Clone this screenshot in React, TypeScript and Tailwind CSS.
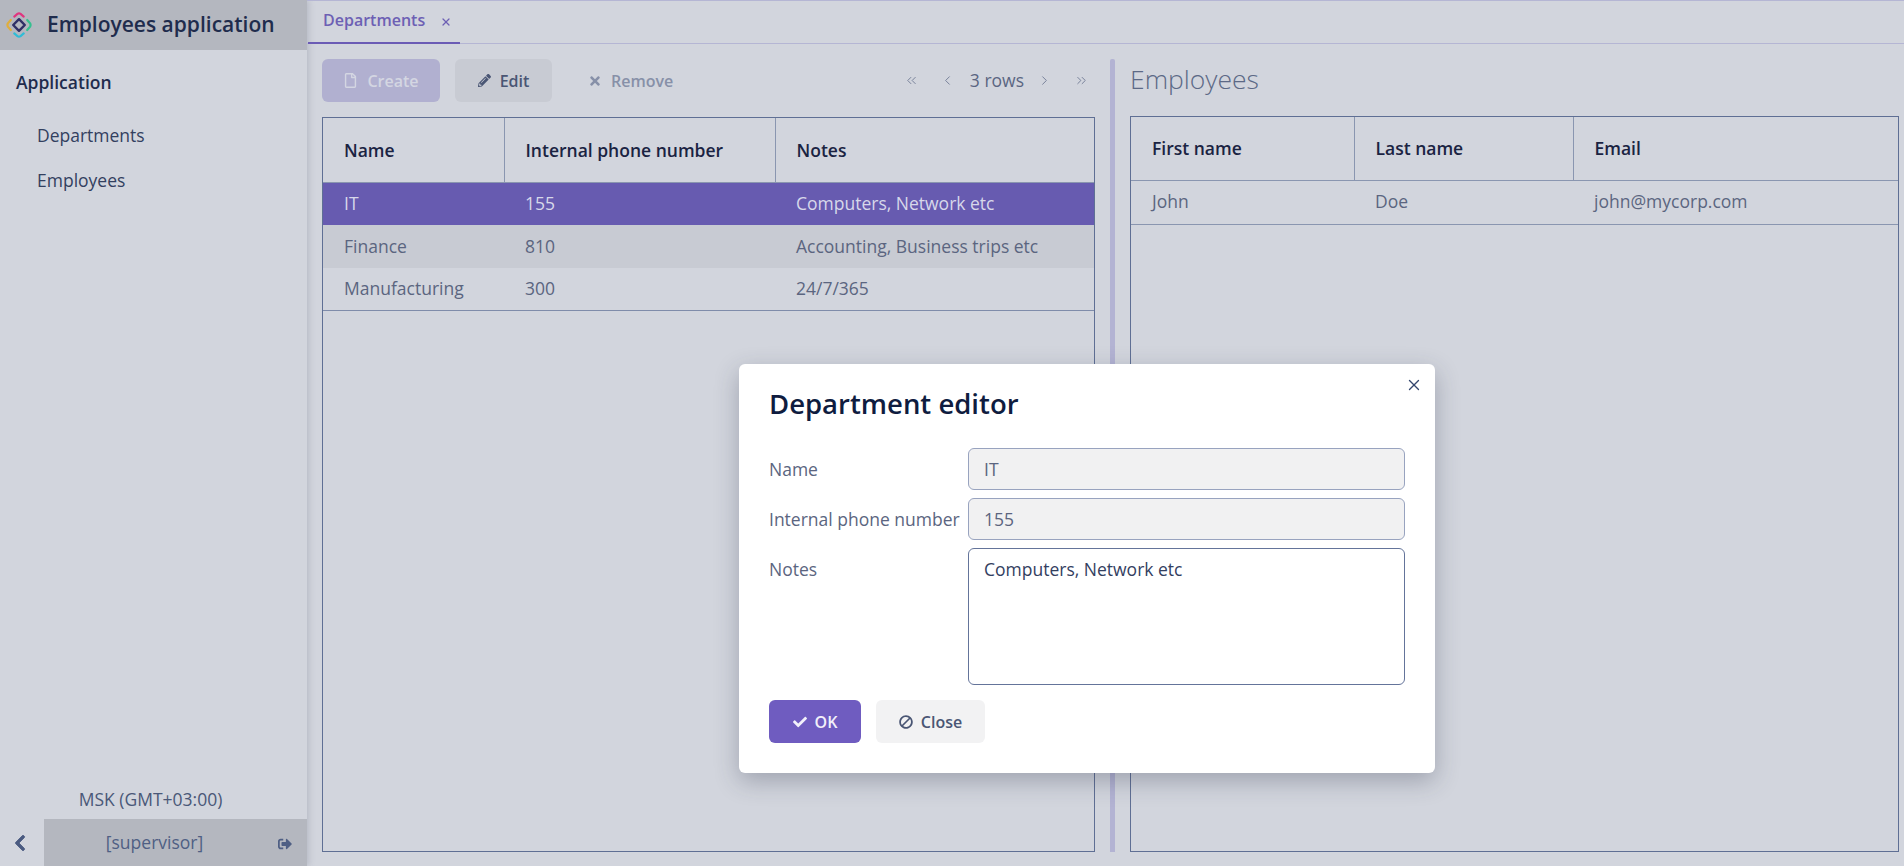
import React from "react";
import { FaRegFile, FaPencilAlt, FaTimes, FaCheck, FaBan, FaChevronLeft, FaSignOutAlt } from "react-icons/fa";
import { ChevronsLeft, ChevronsRight, ChevronLeft, ChevronRight, X } from "lucide-react";

function Logo() {
  return (
    <svg width="26" height="26" viewBox="0 0 26 26" fill="none" strokeLinecap="round">
      <path d="M13 7.2 L18.8 13 L13 18.8 L7.2 13 Z" stroke="#2f2f66" strokeWidth="2.4" strokeLinejoin="round" />
      <path d="M8.3 4.6 L11.4 1.9 Q13 .9 14.6 1.9 L17.7 4.6" stroke="#e0357f" strokeWidth="2.2" />
      <path d="M21.2 8 L24.1 11.4 Q25 13 24.1 14.6 L21.2 18" stroke="#35c08f" strokeWidth="2.2" />
      <path d="M8.3 21.4 L11.4 24.1 Q13 25.1 14.6 24.1 L17.7 21.4" stroke="#2fbcd6" strokeWidth="2.2" />
      <path d="M4.8 8 L1.9 11.4 Q1 13 1.9 14.6 L4.8 18" stroke="#e0ae3c" strokeWidth="2.2" />
    </svg>
  );
}

function DataTable({ cols, head, headH, rows }: { cols: number[]; head: string[]; headH: string; rows: { cells: string[]; cls: string; h: string }[] }) {
  return (
    <div className="flex-1 border border-[#5f6f94]">
      <table className="w-full table-fixed border-collapse">
        <colgroup>
          {cols.map((c, i) => (
            <col key={i} style={{ width: c ? c : undefined }} />
          ))}
        </colgroup>
        <thead>
          <tr className={`${headH} border-b border-[#8a96b0]`}>
            {head.map((h, i) => (
              <th key={h} className={`pl-[21px] text-left font-semibold text-[#1a2342] ${i < head.length - 1 ? "border-r border-[#8a96b0]" : ""}`}>
                {h}
              </th>
            ))}
          </tr>
        </thead>
        <tbody>
          {rows.map((r, i) => (
            <tr key={i} className={`${r.h} ${r.cls}`}>
              {r.cells.map((c, j) => (
                <td key={j} className="p-0 pb-[1px] pl-[21px]">
                  {c}
                </td>
              ))}
            </tr>
          ))}
        </tbody>
      </table>
    </div>
  );
}

export default function App() {
  return (
    <div className="relative flex h-[866px] w-[1904px] overflow-hidden bg-[#d2d5dd] text-[17.5px] text-[#4f5b78] font-['Open_Sans','Noto_Sans',sans-serif]">
      <aside className="flex w-[307px] shrink-0 flex-col bg-[#d2d5dd] shadow-[2px_0_6px_rgba(90,95,120,0.22)]">
        <div className="flex h-[50px] items-center bg-[#b4b7bf] pl-[6px]">
          <Logo />
          <span className="ml-[15px] text-[21px] font-semibold text-[#1f2c4d]">Employees application</span>
        </div>
        <div className="pl-4 pt-[20px] font-semibold text-[#1f2c4d] leading-[24px]">Application</div>
        <nav className="flex flex-col gap-[21px] pl-[37px] pt-[29px] text-[#33405f] leading-[24px]">
          <span>Departments</span>
          <span>Employees</span>
        </nav>
        <div className="mt-auto pb-[8px] pr-[6px] text-center text-[#4a5878] leading-[24px]">MSK (GMT+03:00)</div>
        <div className="flex h-[47px] items-stretch">
          <div className="flex w-[44px] items-center justify-center pr-[4px] text-[#4a5a80]">
            <FaChevronLeft size={18} stroke="currentColor" strokeWidth={24} />
          </div>
          <div className="flex flex-1 items-center bg-[#b4b7bf]">
            <span className="flex-1 pr-[13px] text-center text-[#4f5f84]">[supervisor]</span>
            <FaSignOutAlt size={14} className="mr-[15px] mt-[3px] text-[#4f5f84]" />
          </div>
        </div>
      </aside>

      <main className="flex min-w-0 flex-1 flex-col">
        <div className="flex h-[44px] shrink-0 border-b border-t border-[#b5b6d4]">
          <div className="-mb-px ml-px flex w-[152px] items-center border-b-2 border-[#6b5cb5] pl-[15px] text-[16px] font-semibold text-[#6d60b4]">
            <span className="-mt-[3px]">Departments</span>
            <X size={12} strokeWidth={2.5} className="ml-[15px]" />
          </div>
        </div>
        <div className="flex min-h-0 flex-1 pb-[14px] pl-[15px] pr-[5px] pt-[15px]">
          <section className="flex w-[773px] shrink-0 flex-col">
            <div className="mb-[15px] flex h-[43px] shrink-0 items-center text-[16px] font-semibold">
              <button className="flex h-[43px] w-[118px] items-center justify-center gap-[9px] rounded-[6px] bg-[#b1b0d0] text-[#d4d6e2]">
                <FaRegFile size={15} />
                Create
              </button>
              <button className="ml-[15px] flex h-[43px] w-[97px] items-center justify-center gap-[9px] rounded-[6px] bg-[#c8cbd3] text-[#4a5674]">
                <FaPencilAlt size={13} />
                Edit
              </button>
              <button className="ml-[36px] flex items-center gap-[9px] text-[#8790a8]">
                <FaTimes size={14} />
                Remove
              </button>
              <div className="ml-auto flex items-center pr-[6px] font-normal text-[#5b6682]">
                <ChevronsLeft size={15} strokeWidth={1.4} className="text-[#6b7690]" />
                <ChevronLeft size={15} strokeWidth={1.4} className="ml-[21px] text-[#6b7690]" />
                <span className="ml-[15px] text-[17.5px]">3 rows</span>
                <ChevronRight size={15} strokeWidth={1.4} className="ml-[13px] text-[#6b7690]" />
                <ChevronsRight size={15} strokeWidth={1.4} className="ml-[22px] text-[#6b7690]" />
              </div>
            </div>
            <DataTable
              cols={[181, 271, 0]}
              head={["Name", "Internal phone number", "Notes"]}
              headH="h-[64px]"
              rows={[
                { cells: ["IT", "155", "Computers, Network etc"], cls: "bg-[#675bb0] text-[#d7d8ea]", h: "h-[43px]" },
                { cells: ["Finance", "810", "Accounting, Business trips etc"], cls: "bg-[#c8cbd3] text-[#5b6580]", h: "h-[43px]" },
                { cells: ["Manufacturing", "300", "24/7/365"], cls: "border-b border-[#7f8caa] text-[#5b6580]", h: "h-[42px]" },
              ]}
            />
          </section>

          <div className="mx-[15px] w-[5px] shrink-0 rounded-t-[2px] bg-[#b3b3d3]" />

          <section className="flex min-w-0 flex-1 flex-col">
            <h2 className="mb-[14px] flex h-[43px] shrink-0 items-center pb-[2px] text-[26.5px] font-light text-[#5c6986]">Employees</h2>
            <DataTable
              cols={[223, 219, 0]}
              head={["First name", "Last name", "Email"]}
              headH="h-[63px]"
              rows={[{ cells: ["John", "Doe", "john@mycorp.com"], cls: "border-b border-[#8a96b0] text-[#5b6580]", h: "h-[44px]" }]}
            />
          </section>
        </div>
      </main>

      <div className="absolute left-[739px] top-[364px] h-[409px] w-[696px] rounded-[6px] bg-white px-[30px] pt-[20px] shadow-[0_8px_24px_rgba(40,45,70,0.3)]">
        <X size={18} strokeWidth={1.8} className="absolute right-[12px] top-[12px] text-[#33466e]" />
        <h1 className="h-[40px] text-[27.5px] font-semibold leading-[40px] text-[#0f1c3f]">Department editor</h1>
        <div className="mt-[24px] flex flex-col gap-[8px]">
          <div className="flex items-center">
            <label className="w-[199px] shrink-0 text-[#5b6580]">Name</label>
            <div className="flex h-[42px] w-[437px] items-center rounded-[6px] border border-[#98a3bf] bg-[#f1f1f2] pl-[15px] text-[#5b6580]">IT</div>
          </div>
          <div className="flex items-center">
            <label className="w-[199px] shrink-0 text-[#5b6580]">Internal phone number</label>
            <div className="flex h-[42px] w-[437px] items-center rounded-[6px] border border-[#98a3bf] bg-[#f1f1f2] pl-[15px] text-[#5b6580]">155</div>
          </div>
          <div className="flex items-start">
            <label className="w-[199px] shrink-0 pt-[8px] text-[#5b6580]">Notes</label>
            <div className="h-[137px] w-[437px] rounded-[6px] border border-[#64749a] pl-[15px] pt-[7px] text-[#33405f]">Computers, Network etc</div>
          </div>
        </div>
        <div className="mt-[15px] flex gap-[15px] text-[16px] font-semibold">
          <button className="flex h-[43px] w-[92px] items-center justify-center gap-[8px] rounded-[6px] bg-[#6f5cc0] text-[#f2f0fa]">
            <FaCheck size={14} />
            OK
          </button>
          <button className="flex h-[43px] w-[109px] items-center justify-center gap-[8px] rounded-[6px] bg-[#f2f2f3] text-[#4a5674]">
            <FaBan size={14} className="-scale-x-100" />
            Close
          </button>
        </div>
      </div>
    </div>
  );
}
